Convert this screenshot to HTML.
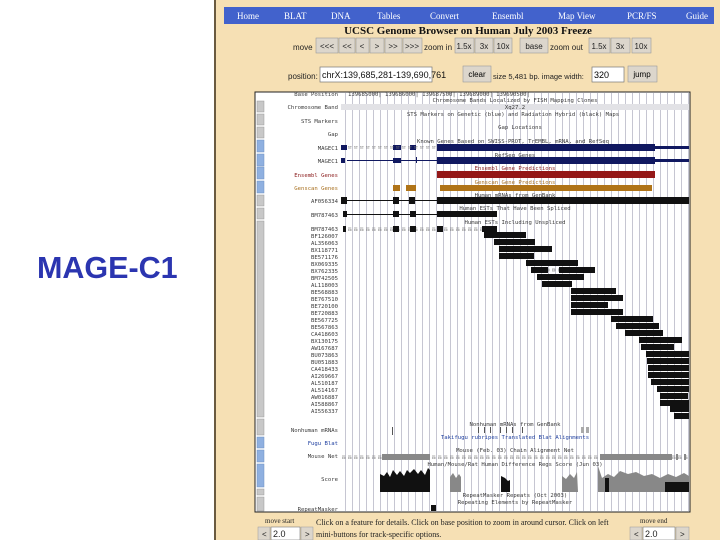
<!DOCTYPE html>
<html><head><meta charset="utf-8"><style>
html,body{margin:0;padding:0;width:720px;height:540px;overflow:hidden;background:#fff;font-family:"Liberation Sans",sans-serif}
svg{position:absolute;left:0;top:0}
</style></head><body>
<svg width="720" height="540" viewBox="0 0 720 540" xmlns="http://www.w3.org/2000/svg" font-family="Liberation Sans, sans-serif">
<defs>
<pattern id="grid" x="345" y="0" width="7" height="10" patternUnits="userSpaceOnUse"><rect x="0" y="0" width="1" height="10" fill="#c6c6d2"/></pattern>
<pattern id="dots" x="0" y="0" width="6" height="4" patternUnits="userSpaceOnUse"><rect x="0" y="1" width="3" height="2" fill="none" stroke="#777" stroke-width="0.6"/></pattern>
</defs>
<rect x="0" y="0" width="720" height="540" fill="#fff"/>
<text x="37" y="278" font-size="30.5" font-weight="bold" fill="#2b35b0">MAGE-C1</text>
<rect x="214" y="0" width="2" height="540" fill="#6a5a40"/>
<rect x="216" y="0" width="504" height="540" fill="#f6e0b4"/>
<rect x="224" y="7" width="490" height="17" fill="#4262cc"/>
<g fill="#fff" font-size="9" font-family="Liberation Serif, serif">
<text x="237" y="19">Home</text><text x="284" y="19">BLAT</text><text x="331" y="19">DNA</text><text x="377" y="19">Tables</text><text x="430" y="19">Convert</text><text x="492" y="19">Ensembl</text><text x="558" y="19">Map View</text><text x="627" y="19">PCR/FS</text><text x="686" y="19">Guide</text>
</g>
<text x="468" y="34" font-size="11" font-weight="bold" text-anchor="middle" font-family="Liberation Serif, serif" fill="#111">UCSC Genome Browser on Human July 2003 Freeze</text>
<g font-size="8" fill="#222">
<text x="293" y="50">move</text><text x="424" y="50">zoom in</text><text x="550" y="50">zoom out</text>
</g>
<g fill="#dcd6cc" stroke="#999" stroke-width="0.6">
<rect x="316" y="38" width="22" height="15"/><rect x="339" y="38" width="16" height="15"/><rect x="356" y="38" width="13" height="15"/><rect x="370" y="38" width="14" height="15"/><rect x="385" y="38" width="17" height="15"/><rect x="403" y="38" width="19" height="15"/>
<rect x="455" y="38" width="19" height="15"/><rect x="475" y="38" width="18" height="15"/><rect x="494" y="38" width="18" height="15"/><rect x="520" y="38" width="28" height="15"/>
<rect x="589" y="38" width="21" height="15"/><rect x="611" y="38" width="19" height="15"/><rect x="632" y="38" width="19" height="15"/>
</g>
<g font-size="8" fill="#222" text-anchor="middle">
<text x="327" y="49">&lt;&lt;&lt;</text><text x="347" y="49">&lt;&lt;</text><text x="362" y="49">&lt;</text><text x="377" y="49">&gt;</text><text x="393" y="49">&gt;&gt;</text><text x="412" y="49">&gt;&gt;&gt;</text>
<text x="464" y="49">1.5x</text><text x="484" y="49">3x</text><text x="503" y="49">10x</text><text x="534" y="49">base</text>
<text x="599" y="49">1.5x</text><text x="620" y="49">3x</text><text x="641" y="49">10x</text>
</g>
<text x="288" y="79" font-size="8" fill="#222">position:</text>
<rect x="320" y="67" width="112" height="15" fill="#fff" stroke="#777" stroke-width="0.7"/>
<text x="322" y="78" font-size="9" fill="#111">chrX:139,685,281-139,690,761</text>
<rect x="463" y="66" width="28" height="16" fill="#dcd6cc" stroke="#999" stroke-width="0.6"/><text x="477" y="77" font-size="8" text-anchor="middle">clear</text>
<text x="493" y="79" font-size="7.5" fill="#222">size 5,481 bp.  image width:</text>
<rect x="592" y="67" width="32" height="15" fill="#fff" stroke="#777" stroke-width="0.7"/><text x="594" y="78" font-size="9">320</text>
<rect x="628" y="66" width="29" height="16" fill="#dcd6cc" stroke="#999" stroke-width="0.6"/><text x="642" y="77" font-size="8" text-anchor="middle">jump</text>
<rect x="255" y="92" width="435" height="420" fill="#fff" stroke="#222" stroke-width="1"/>
<rect x="341" y="93" width="348" height="418" fill="url(#grid)"/>
<g fill="#c8c8c8" stroke="#999" stroke-width="0.5">
<rect x="257" y="101" width="7" height="11"/><rect x="257" y="114" width="7" height="11"/><rect x="257" y="127" width="7" height="11"/><rect x="257" y="195" width="7" height="11"/><rect x="257" y="208" width="7" height="11"/><rect x="257" y="221" width="7" height="196"/><rect x="257" y="419" width="7" height="16"/><rect x="257" y="489" width="7" height="6"/><rect x="257" y="497" width="7" height="14"/>
</g>
<g fill="#8fb0e0" stroke="#6f8fc0" stroke-width="0.5">
<rect x="257" y="140" width="7" height="12"/><rect x="257" y="154" width="7" height="12"/><rect x="257" y="167" width="7" height="12"/><rect x="257" y="181" width="7" height="12"/><rect x="257" y="437" width="7" height="11"/><rect x="257" y="450" width="7" height="12"/><rect x="257" y="464" width="7" height="23"/>
</g>
<g font-family="DejaVu Sans Mono, monospace" font-size="5.6" fill="#3a3a3a">
<text x="338" y="96" text-anchor="end">Base Position</text>
<text x="348" y="96">139685000|       139686000|     139687500|     139689000|    139690500|</text>
<text x="338" y="109" text-anchor="end">Chromosome Band</text>
<text x="515" y="102" text-anchor="middle">Chromosome Bands Localized by FISH Mapping Clones</text>
<text x="338" y="123" text-anchor="end">STS Markers</text>
<text x="513" y="116" text-anchor="middle">STS Markers on Genetic (blue) and Radiation Hybrid (black) Maps</text>
<text x="338" y="136" text-anchor="end">Gap</text>
<text x="520" y="129" text-anchor="middle">Gap Locations</text>
<text x="338" y="150" text-anchor="end">MAGEC1</text>
<text x="513" y="143" text-anchor="middle">Known Genes Based on SWISS-PROT, TrEMBL, mRNA, and RefSeq</text>
<text x="338" y="163" text-anchor="end">MAGEC1</text>
<text x="515" y="157" text-anchor="middle">RefSeq Genes</text>
<text x="338" y="177" text-anchor="end" fill="#8a1a1a">Ensembl Genes</text>
<text x="515" y="170" text-anchor="middle" fill="#8a1a1a">Ensembl Gene Predictions</text>
<text x="338" y="190" text-anchor="end" fill="#a87020">Genscan Genes</text>
<text x="515" y="184" text-anchor="middle" fill="#a87020">Genscan Gene Predictions</text>
<text x="338" y="203" text-anchor="end">AF056334</text>
<text x="515" y="197" text-anchor="middle">Human mRNAs from GenBank</text>
<text x="338" y="217" text-anchor="end">BM787463</text>
<text x="515" y="210" text-anchor="middle">Human ESTs That Have Been Spliced</text>
<text x="515" y="224" text-anchor="middle">Human ESTs Including Unspliced</text>
<g text-anchor="end">
<text x="338" y="231">BM787463</text><text x="338" y="238">BF126007</text><text x="338" y="245">AL356063</text><text x="338" y="252">BX118771</text><text x="338" y="259">BE571176</text><text x="338" y="266">BX069335</text><text x="338" y="273">BX762335</text><text x="338" y="280">BM742505</text><text x="338" y="287">AL118003</text><text x="338" y="294">BE568883</text><text x="338" y="301">BE767510</text><text x="338" y="308">BE720100</text><text x="338" y="315">BE720883</text><text x="338" y="322">BE567725</text><text x="338" y="329">BE567863</text><text x="338" y="336">CA418603</text><text x="338" y="343">BX130175</text><text x="338" y="350">AW167687</text><text x="338" y="357">BU073863</text><text x="338" y="364">BU051883</text><text x="338" y="371">CA418433</text><text x="338" y="378">AI269667</text><text x="338" y="385">AL510187</text><text x="338" y="392">AL514167</text><text x="338" y="399">AW016887</text><text x="338" y="406">AI588867</text><text x="338" y="413">AI556337</text>
</g>
<text x="338" y="432" text-anchor="end">Nonhuman mRNAs</text>
<text x="515" y="426" text-anchor="middle">Nonhuman mRNAs from GenBank</text>
<text x="338" y="445" text-anchor="end" fill="#2040a0">Fugu Blat</text>
<text x="515" y="439" text-anchor="middle" fill="#2040a0">Takifugu rubripes Translated Blat Alignments</text>
<text x="338" y="458" text-anchor="end">Mouse Net</text>
<text x="515" y="452" text-anchor="middle">Mouse (Feb. 03) Chain Alignment Net</text>
<text x="515" y="466" text-anchor="middle">Human/Mouse/Rat Human Difference Regs Score (Jun 03)</text>
<text x="338" y="481" text-anchor="end">Score</text>
<text x="515" y="497" text-anchor="middle">RepeatMasker Repeats (Oct 2003)</text>
<text x="515" y="504" text-anchor="middle">Repeating Elements by RepeatMasker</text>
<text x="338" y="511" text-anchor="end">RepeatMasker</text>
</g>
<rect x="341" y="104" width="348" height="6" fill="#e2e2e6"/>
<text x="515" y="109" font-size="5.6" font-family="DejaVu Sans Mono, monospace" text-anchor="middle" fill="#333">Xq27.2</text>
<g fill="#101860">
<rect x="341" y="145" width="6" height="5"/><rect x="393" y="145" width="8" height="5"/><rect x="410" y="145" width="6" height="5"/><rect x="437" y="144" width="218" height="7"/><rect x="655" y="146" width="34" height="3"/>
<rect x="347" y="160" width="90" height="1"/><rect x="341" y="158" width="4" height="5"/><rect x="393" y="158" width="8" height="5"/><rect x="416" y="157" width="1" height="6"/><rect x="437" y="157" width="218" height="7"/><rect x="655" y="159" width="34" height="3"/>
</g>
<rect x="347" y="146" width="90" height="3" fill="url(#dots)"/>
<rect x="437" y="171" width="218" height="7" fill="#941818"/>
<g fill="#b07418"><rect x="393" y="185" width="7" height="6"/><rect x="406" y="185" width="10" height="6"/><rect x="440" y="185" width="212" height="6"/></g>
<g fill="#111">
<rect x="341" y="197" width="6" height="7"/><rect x="347" y="200" width="90" height="1"/><rect x="393" y="197" width="6" height="7"/><rect x="409" y="197" width="6" height="7"/><rect x="437" y="197" width="252" height="7"/>
<rect x="343" y="211" width="4" height="6"/><rect x="347" y="214" width="90" height="1"/><rect x="393" y="211" width="6" height="6"/><rect x="410" y="211" width="6" height="6"/><rect x="437" y="211" width="6" height="6"/><rect x="443" y="211" width="17" height="6"/><rect x="460" y="211" width="37" height="6"/>
<rect x="343" y="226" width="3" height="6"/><rect x="393" y="226" width="6" height="6"/><rect x="410" y="226" width="6" height="6"/><rect x="437" y="226" width="6" height="6"/><rect x="482" y="226" width="15" height="6"/>
<rect x="484" y="232" width="42" height="6"/><rect x="494" y="239" width="41" height="6"/><rect x="499" y="246" width="53" height="6"/><rect x="499" y="253" width="35" height="6"/><rect x="526" y="260" width="52" height="6"/><rect x="531" y="267" width="17" height="6"/><rect x="559" y="267" width="36" height="6"/><rect x="537" y="274" width="47" height="6"/><rect x="542" y="281" width="30" height="6"/><rect x="571" y="288" width="45" height="6"/><rect x="571" y="295" width="52" height="6"/><rect x="571" y="302" width="37" height="6"/><rect x="571" y="309" width="52" height="6"/><rect x="611" y="316" width="42" height="6"/><rect x="616" y="323" width="43" height="6"/><rect x="625" y="330" width="38" height="6"/><rect x="639" y="337" width="43" height="6"/><rect x="641" y="344" width="33" height="6"/><rect x="646" y="351" width="43" height="6"/><rect x="647" y="358" width="42" height="6"/><rect x="648" y="365" width="41" height="6"/><rect x="648" y="372" width="41" height="6"/><rect x="651" y="379" width="38" height="6"/><rect x="657" y="386" width="32" height="6"/><rect x="660" y="393" width="28" height="6"/><rect x="660" y="400" width="29" height="6"/><rect x="670" y="406" width="19" height="6"/><rect x="674" y="413" width="15" height="6"/>
</g>
<g fill="url(#dots)"><rect x="347" y="227" width="46" height="4"/><rect x="399" y="227" width="11" height="4"/><rect x="416" y="227" width="21" height="4"/><rect x="443" y="227" width="39" height="4"/><rect x="548" y="268" width="11" height="4"/></g>
<g fill="#555"><rect x="392" y="427" width="1" height="8"/><rect x="478" y="427" width="1" height="6"/><rect x="484" y="427" width="1" height="6"/><rect x="490" y="427" width="1" height="6"/><rect x="500" y="427" width="1" height="6"/><rect x="506" y="427" width="1" height="6"/><rect x="512" y="427" width="1" height="6"/><rect x="522" y="427" width="1" height="6"/><rect x="581" y="427" width="3" height="6" fill="#aaa"/><rect x="586" y="427" width="3" height="6" fill="#aaa"/></g>
<rect x="341" y="455" width="348" height="4" fill="url(#dots)"/>
<rect x="382" y="454" width="48" height="6" fill="#888"/><rect x="600" y="454" width="72" height="6" fill="#888"/><rect x="676" y="454" width="2" height="6" fill="#888"/><rect x="684" y="454" width="2" height="6" fill="#888"/>
<path d="M380 492 L380 474 L384 476 L387 472 L390 477 L393 470 L397 475 L400 471 L404 476 L407 470 L410 473 L414 469 L418 474 L421 470 L425 475 L428 468 L430 470 L430 492 Z" fill="#111"/>
<path d="M450 492 L450 477 L453 473 L456 478 L459 474 L461 477 L461 492 Z" fill="#888"/>
<path d="M501 492 L501 476 L505 478 L508 481 L510 480 L510 492 Z" fill="#111"/>
<path d="M562 492 L562 476 L566 479 L570 474 L574 478 L577 472 L578 492 Z" fill="#888"/>
<path d="M598 492 L598 466 L602 478 L608 474 L614 477 L620 471 L628 474 L636 472 L644 476 L652 474 L660 478 L668 474 L676 477 L684 473 L689 476 L689 492 Z" fill="#888"/>
<rect x="605" y="478" width="4" height="14" fill="#111"/><rect x="665" y="482" width="24" height="10" fill="#111"/>
<rect x="431" y="505" width="5" height="6" fill="#111"/>
<text x="265" y="523" font-size="7" fill="#222" font-family="Liberation Serif, serif">move start</text>
<text x="640" y="523" font-size="7" fill="#222" font-family="Liberation Serif, serif">move end</text>
<g fill="#dcd6cc" stroke="#999" stroke-width="0.5"><rect x="258" y="527" width="12" height="13"/><rect x="301" y="527" width="12" height="13"/><rect x="630" y="527" width="12" height="13"/><rect x="676" y="527" width="13" height="13"/></g>
<rect x="271" y="527" width="29" height="13" fill="#fff" stroke="#777" stroke-width="0.6"/><rect x="643" y="527" width="32" height="13" fill="#fff" stroke="#777" stroke-width="0.6"/>
<g font-size="8" fill="#222"><text x="262" y="537">&lt;</text><text x="305" y="537">&gt;</text><text x="634" y="537">&lt;</text><text x="680" y="537">&gt;</text><text x="273" y="537" font-size="9">2.0</text><text x="645" y="537" font-size="9">2.0</text></g>
<g font-size="8" fill="#222" font-family="Liberation Serif, serif"><text x="316" y="525">Click on a feature for details. Click on base position to zoom in around cursor. Click on left</text><text x="316" y="537">mini-buttons for track-specific options.</text></g>
</svg>
</body></html>
